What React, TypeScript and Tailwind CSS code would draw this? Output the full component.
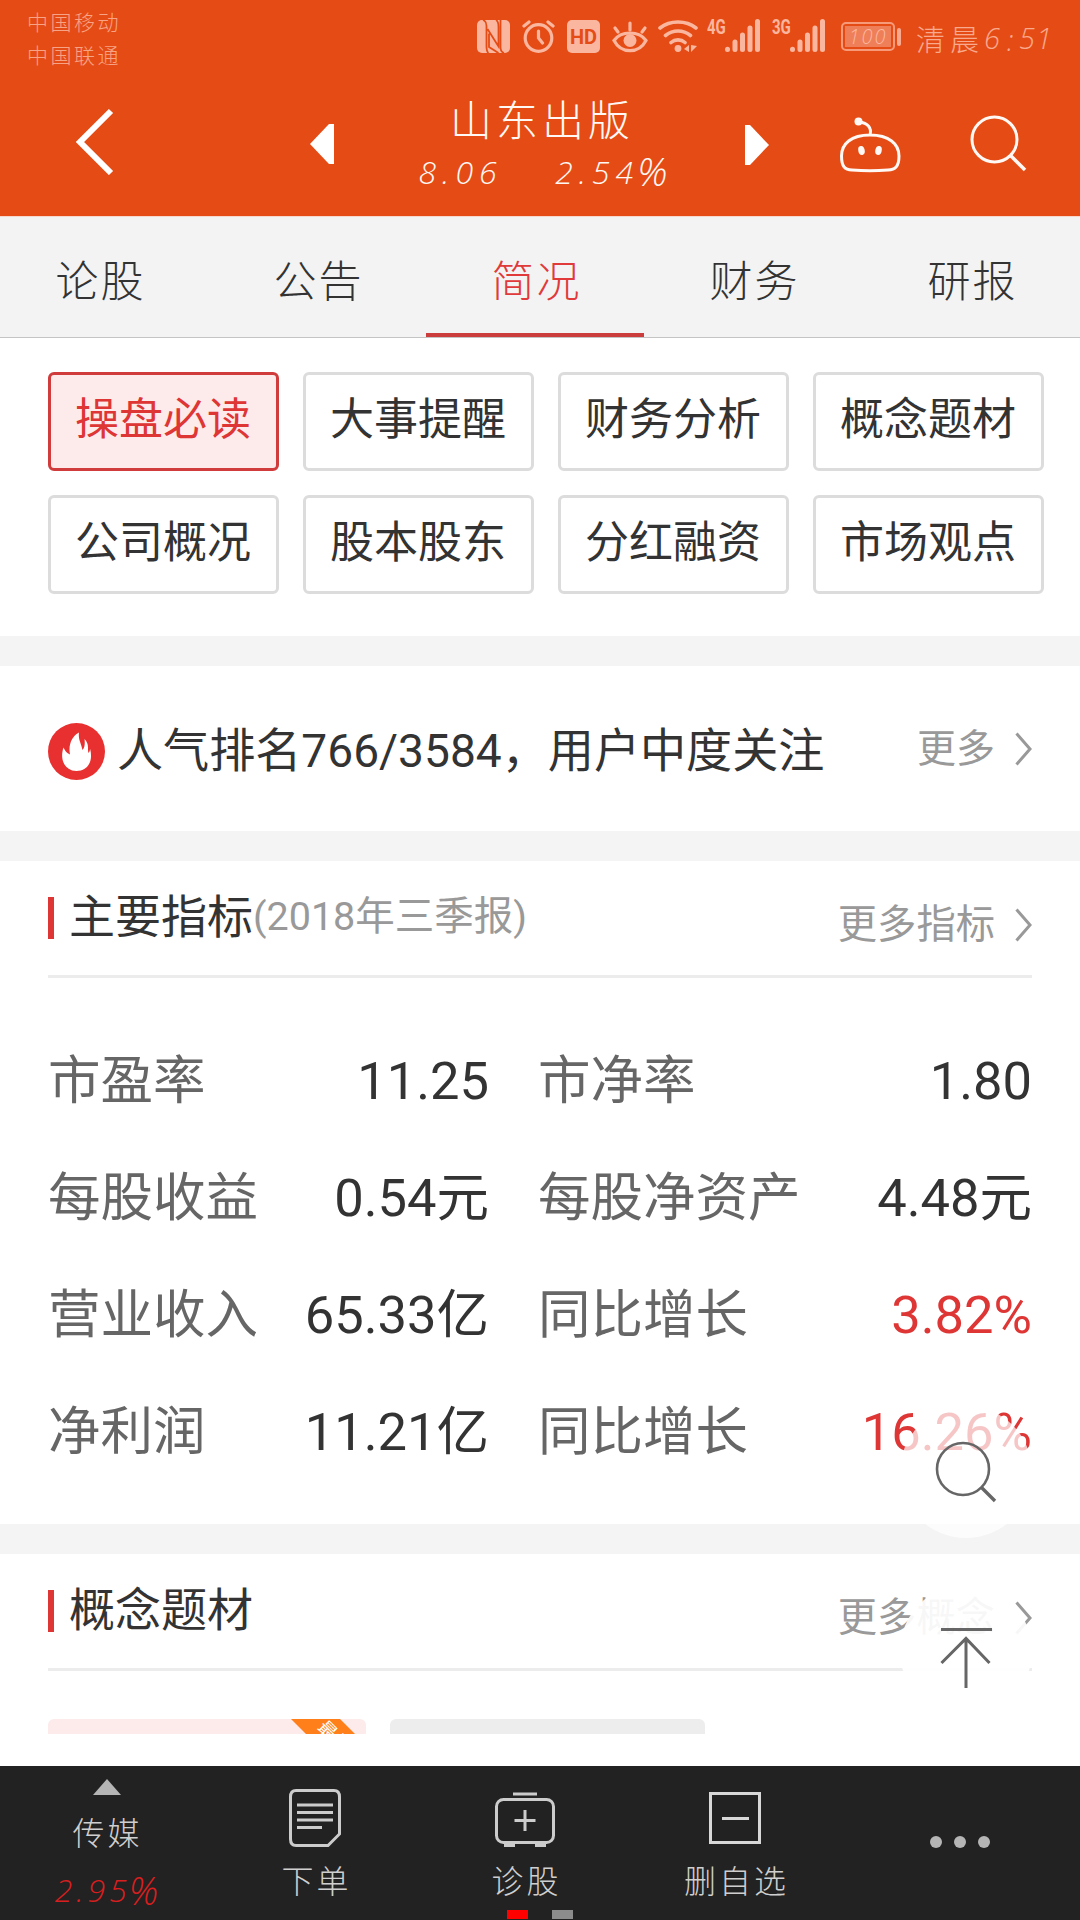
import React from "react";

const SANS = "font-['Roboto','Noto_Sans_CJK_SC',sans-serif]";
const HAND = "font-['Noto_Sans_CJK_SC',sans-serif] font-light";
const HAND_NUM = "font-['Open_Sans','Noto_Sans',sans-serif] font-light italic";

function Signal({ label }: { label: string }) {
  return (
    <div className="flex h-[33px] w-[53px] items-start">
      <span className="w-[18px] origin-left scale-x-[0.75] font-['Roboto',sans-serif] text-[20px] leading-[16px] font-bold">{label}</span>
      <svg className="h-[33px] w-[35px]" viewBox="0 0 35 33" stroke="currentColor" strokeWidth="5" strokeLinecap="round">
        <path d="M2.5 30.2v.3M10 23v7.5M17.500 16v14.500M25 9v21.500M32.500 2.500v28" />
      </svg>
    </div>
  );
}

function StatusBar() {
  return (
    <div className="flex h-[72px] items-start text-[#fbb69f]">
      <div className={`mt-[5px] ml-[27px] w-[450px] text-[21px] leading-[33px] tracking-[2.5px] text-[#f7a386] ${HAND}`}>
        <div>中国移动</div>
        <div>中国联通</div>
      </div>
      <div className="mt-[20px] flex gap-[12px]">
        <svg className="h-[33px] w-[33px]" viewBox="0 0 33 33">
          <rect width="33" height="33" rx="5" fill="currentColor" />
          <path d="M6 0C9 1 9.500 3 9.500 6V26c0 4 .5 6 2 7M10.500 9L21.500 26.500V7C21.500 3 21 1 19 0M27 33C24 32 23.500 30 23.500 27V0M12 13.500V27L21.500 33" fill="none" stroke="#e54c15" strokeWidth="1.800" />
        </svg>
        <svg className="h-[33px] w-[33px]" viewBox="0 0 33 33" fill="none" stroke="currentColor" strokeWidth="3.200" strokeLinecap="round">
          <circle cx="16.500" cy="18" r="13.300" />
          <path d="M16.500 11v7l4 5M2 6l5-4M31 6l-5-4" />
        </svg>
        <div className="flex h-[33px] w-[33px] items-center justify-center rounded-[5px] bg-[#fbb69f] font-['Roboto',sans-serif] text-[20px] leading-none font-bold text-[#e54c15]">HD</div>
        <svg className="h-[33px] w-[36px]" viewBox="0 0 36 33" fill="none" stroke="currentColor" strokeWidth="3.200" strokeLinecap="round">
          <path d="M2 20.500C9 10.500 27 10.500 34 20.500C27 34 9 34 2 20.500Z" />
          <circle cx="18" cy="20.500" r="6.500" fill="currentColor" stroke="none" />
          <path d="M18 3v7M3 8l3 4M33 8l-3 4" />
        </svg>
      </div>
      <svg className="mt-[20px] ml-[10px] h-[33px] w-[40px]" viewBox="0 0 40 33" fill="none" stroke="currentColor" strokeWidth="3.600" strokeLinecap="round">
        <path d="M2 8C12 0 28 0 38 8M7.500 15.500C15 9.500 25 9.500 32.500 15.500M13 22.500C17 19 23 19 27 22.500" />
        <circle cx="20" cy="28.500" r="3.400" fill="currentColor" stroke="none" />
        <path d="M31 25v7l-5-3ZM33 32v-7l6 1Z" fill="currentColor" stroke="none" />
      </svg>
      <div className="mt-[19px] ml-[9px] flex gap-[12px]">
        <Signal label="4G" />
        <Signal label="3G" />
      </div>
      <div className="mt-[22px] ml-[16px] flex items-center gap-[2px]">
        <div className="h-[29px] w-[54px] rounded-[5px] border-2 border-[#f79a7a] p-[2px]">
          <div className={`flex h-[21px] items-center justify-center bg-[#ef7f58] text-[20px] leading-none tracking-[2px] ${HAND_NUM}`}>100</div>
        </div>
        <div className="h-[18px] w-[4px] rounded-[2px] bg-[#f9a98e]" />
      </div>
      <div className="mt-[19px] ml-[15px] flex h-[38px] items-center text-[#f9a98e]">
        <span className={`text-[29px] leading-[36px] tracking-[5px] ${HAND}`}>清晨</span>
        <span className={`text-[29px] leading-[32px] tracking-[1px] ${HAND_NUM}`}>6</span>
        <span className={`w-[18px] pt-[3px] text-center text-[29px] leading-[32px] ${HAND_NUM}`}>:</span>
        <span className={`text-[29px] leading-[32px] tracking-[1px] ${HAND_NUM}`}>51</span>
      </div>
    </div>
  );
}

function TitleBar() {
  return (
    <div className="flex h-[144px] items-start text-[#fff8f4]">
      <svg className="mt-[35px] ml-[74px] h-[68px] w-[42px]" viewBox="0 0 42 68" fill="none" stroke="white" strokeWidth="6">
        <path d="M37 4L6 35L37 66" />
      </svg>
      <svg className="mt-[52px] ml-[194px] h-[40px] w-[24px]" viewBox="0 0 24 40" fill="white">
        <path d="M24 0h-5L0 20L19 40h5Z" />
      </svg>
      <div className="flex w-[411px] flex-col items-center">
        <div className={`mt-[20px] pl-[5px] text-[42px] leading-[52px] tracking-[4px] whitespace-nowrap ${HAND}`}>山东出版</div>
        <div className={`mt-[4px] flex w-[248px] justify-between pt-[2px] text-[32px] leading-[44px] whitespace-nowrap ${HAND_NUM}`}>
          <span className="ml-[3px] tracking-[6px]">8.06</span>
          <span className="-mr-[4px] flex tracking-[6px]">
            2.54<span className="-mt-[1px] -ml-[2px] text-[39px] tracking-normal">%</span>
          </span>
        </div>
      </div>
      <svg className="mt-[53px] h-[40px] w-[24px]" viewBox="0 0 24 40" fill="white">
        <path d="M0 0h5L24 20L5 40H0Z" />
      </svg>
      <svg className="mt-[44px] ml-[70px] h-[58px] w-[62px]" viewBox="0 0 62 58" fill="none" stroke="currentColor" strokeWidth="3">
        <path d="M31 19C50 19 60 28 60 40C60 51 56 53.500 49 54Q31 55.500 13 54C6 53.500 2.500 51 2.500 40C2.500 28 12 19 31 19ZM31 19C33 12 29 7 20 6" />
        <circle cx="19.500" cy="5.500" r="4" fill="currentColor" stroke="none" />
        <ellipse cx="22.500" cy="34.500" rx="3.200" ry="4.500" fill="currentColor" stroke="none" transform="rotate(-12 22.500 34.500)" />
        <ellipse cx="39.500" cy="34.500" rx="3.200" ry="4.500" fill="currentColor" stroke="none" transform="rotate(12 39.500 34.500)" />
      </svg>
      <svg className="mt-[43px] ml-[69px] h-[58px] w-[58px]" viewBox="0 0 58 58" fill="none" stroke="currentColor" strokeWidth="3">
        <circle cx="24.500" cy="24.500" r="22.500" />
        <path d="M40 40L55 55" strokeWidth="3.500" />
      </svg>
    </div>
  );
}

const tabs = ["论股", "公告", "简况", "财务", "研报"];
const topics = ["操盘必读", "大事提醒", "财务分析", "概念题材", "公司概况", "股本股东", "分红融资", "市场观点"];
const metrics = [
  ["市盈率", "11.25", "市净率", "1.80", false],
  ["每股收益", "0.54元", "每股净资产", "4.48元", false],
  ["营业收入", "65.33亿", "同比增长", "3.82%", true],
  ["净利润", "11.21亿", "同比增长", "16.26%", true],
] as const;

function Chevron() {
  return (
    <svg className="ml-[20px] h-[34px] w-[17px]" viewBox="0 0 17 34" fill="none" stroke="#999999" strokeWidth="3">
      <path d="M1.500 1.500L15 17L1.500 32.500" />
    </svg>
  );
}

function SectionHead({ title, note, more }: { title: string; note?: string; more: string }) {
  return (
    <div className="mx-[48px] flex h-[117px] items-start border-b-[3px] border-[#ececec]">
      <div className="mt-[36px] h-[42px] w-[6px] bg-[#de3535]" />
      <div className="mt-[26px] ml-[15px] flex h-[60px] items-center whitespace-nowrap">
        <span className="text-[46px] text-[#333333]">{title}</span>
        {note && <span className="text-[39.500px] text-[#999999]">{note}</span>}
      </div>
      <div className="mt-[39px] ml-auto flex h-[50px] items-center text-[39.300px] text-[#999999]">
        <span>{more}</span>
        <Chevron />
      </div>
    </div>
  );
}

function BottomBar() {
  const label = `text-[32px] leading-[40px] tracking-[3px] whitespace-nowrap text-[#cfcfcf] ${HAND}`;
  return (
    <div className="relative grid h-[154px] grid-cols-[210px_210px_210px_210px_240px] bg-[#222222]">
      <div className="flex flex-col items-center">
        <svg className="mt-[13px] ml-[3px] h-[16px] w-[28px]" viewBox="0 0 28 16" fill="#b5b5b5">
          <path d="M14 0L28 16H0Z" />
        </svg>
        <div className={`mt-[16px] ml-[5px] ${label}`}>传媒</div>
        <div className={`mt-[17px] ml-[3px] flex text-[32px] leading-[44px] tracking-[4px] text-[#d81e1e] ${HAND_NUM}`}>
          2.95<span className="-ml-[2px] text-[38px] tracking-normal">%</span>
        </div>
      </div>
      <div className="flex flex-col items-center pt-[23px]">
        <svg className="h-[58px] w-[52px]" viewBox="0 0 52 58" fill="none" stroke="#cccccc" strokeWidth="3">
          <path d="M7 1.500H45Q50.500 1.500 50.500 8V45L39 56.500H7Q1.500 56.500 1.500 50V8Q1.500 1.500 7 1.500Z" />
          <path d="M8 16H44M8 23.500H44M8 31H44M8 38.500H33" />
        </svg>
        <div className={`mt-[12px] ml-[3px] ${label}`}>下单</div>
      </div>
      <div className="flex flex-col items-center pt-[25px]">
        <svg className="h-[56px] w-[60px]" viewBox="0 0 60 56" fill="none" stroke="#cccccc" strokeWidth="3">
          <rect x="1.500" y="8.500" width="57" height="43" rx="7" />
          <path d="M18 3H42M30 19v21M19.500 29.500h21" />
          <path d="M9 54H20M40 54H51" strokeWidth="4" />
        </svg>
        <div className={`mt-[12px] ml-[3px] ${label}`}>诊股</div>
      </div>
      <div className="flex flex-col items-center pt-[26px]">
        <div className="flex h-[52px] w-[52px] items-center justify-center border-[3px] border-[#d8d8d8]">
          <div className="h-[3px] w-[27px] bg-[#d8d8d8]" />
        </div>
        <div className={`mt-[15px] ml-[3px] ${label}`}>删自选</div>
      </div>
      <div className="flex justify-center gap-[12px] pt-[70px]">
        <div className="h-[12px] w-[12px] rounded-full bg-[#b5b5b5]" />
        <div className="h-[12px] w-[12px] rounded-full bg-[#b5b5b5]" />
        <div className="h-[12px] w-[12px] rounded-full bg-[#b5b5b5]" />
      </div>
      <div className="absolute bottom-[1px] left-[507px] flex gap-[24px]">
        <div className="h-[9px] w-[21px] bg-[#ff0000]" />
        <div className="h-[9px] w-[21px] bg-[#8c8c8c]" />
      </div>
    </div>
  );
}

export default function App() {
  return (
    <div className={`relative h-[1920px] w-[1080px] overflow-hidden bg-white ${SANS}`}>
      <header className="h-[216px] bg-[#e54c15]">
        <StatusBar />
        <TitleBar />
      </header>

      <nav className="flex h-[122px] overflow-hidden border-t border-b border-t-[#f6d8cc] border-b-[#c4c4c4] bg-[#f3f3f3]">
        <div className="-ml-[10px] flex">
          {tabs.map((t) => (
            <div
              key={t}
              className={`flex h-[120px] w-[218px] justify-center border-b-[4px] pt-[33px] pl-[3px] text-[43px] leading-[56px] tracking-[2px] ${HAND} ${
                t === "简况" ? "border-[#cb3d3d] text-[#e03a3a]" : "border-transparent text-[#333333]"
              }`}
            >
              {t}
            </div>
          ))}
        </div>
      </nav>

      <div className="grid h-[298px] grid-cols-[repeat(4,231px)] content-start gap-[24px] pt-[34px] pl-[48px]">
        {topics.map((t, i) => (
          <div
            key={t}
            className={`flex h-[99px] items-center justify-center rounded-[6px] border-[3px] pr-[1px] pb-[4px] text-[44px] leading-[60px] ${
              i === 0 ? "border-[#d03c3c] bg-[#fdeaea] text-[#de3535]" : "border-[#dcdcdc] text-[#333333]"
            }`}
          >
            {t}
          </div>
        ))}
      </div>

      <div className="h-[30px] bg-[#f4f4f4]" />

      <div className="mx-[48px] flex h-[165px] items-center">
        <svg className="mt-[6px] h-[57px] w-[57px]" viewBox="0 0 57 57">
          <circle cx="28.500" cy="28.500" r="28.500" fill="#e83030" />
          <path d="M31 9.500C30 16 33 20 34.500 27C37 24 37 20 36.500 16C42 22 39 26 40.500 30C42 28 42 27 42 25.500C46 40 38 48 28.500 48C18 48 11 38 15.500 24.500C17 28 18.500 30 22 31.500C20 22 24 13 31 9.500Z" fill="white" />
        </svg>
        <span className="mt-[6px] ml-[12px] text-[46.100px] whitespace-nowrap text-[#333333]">人气排名766/3584，用户中度关注</span>
        <div className="mt-[1px] ml-auto flex items-center text-[39px] text-[#999999]">
          <span>更多</span>
          <Chevron />
        </div>
      </div>

      <div className="h-[30px] bg-[#f4f4f4]" />

      <SectionHead title="主要指标" note="(2018年三季报)" more="更多指标" />

      <div className="mx-[48px] h-[546px] pt-[44px] text-[52.500px] text-[#333333]">
        {metrics.map(([a, b, c, d, up]) => (
          <div key={a} className="flex h-[117px] items-center leading-[60px] whitespace-nowrap">
            <span className="text-[#666666]">{a}</span>
            <span className="ml-auto">{b}</span>
            <div className="ml-[49px] flex w-[494px] justify-between">
              <span className="text-[#666666]">{c}</span>
              <span className={up ? "text-[#de3535]" : ""}>{d}</span>
            </div>
          </div>
        ))}
      </div>

      <div className="h-[30px] bg-[#f4f4f4]" />

      <SectionHead title="概念题材" more="更多概念" />

      <div className="h-[95px] overflow-hidden pt-[48px] pl-[48px]">
        <div className="flex h-[15px] gap-[24px] overflow-hidden">
          <div className="relative h-[90px] w-[318px] overflow-hidden rounded-[6px] bg-[#fdeaea]">
            <svg className="absolute top-0 left-[243px] h-[75px] w-[75px]" viewBox="0 0 75 75">
              <path d="M0 0H49L75 26V75Z" fill="#ff7f1a" />
            </svg>
            <span className="absolute top-[13px] left-[265px] rotate-45 text-[18px] leading-[22px] whitespace-nowrap text-white">最相关</span>
          </div>
          <div className="h-[90px] w-[315px] rounded-[6px] bg-[#ededed]" />
        </div>
      </div>

      <BottomBar />

      <div className="absolute top-[1406px] left-[900px] h-[132px] w-[132px] rounded-full bg-white/72">
        <svg className="mt-[34px] ml-[34px] h-[66px] w-[66px]" viewBox="0 0 66 66" fill="none" stroke="#666666" strokeWidth="2.600">
          <circle cx="29" cy="29" r="26" />
          <path d="M47.500 47.500L61 61" strokeWidth="3.400" />
        </svg>
      </div>
      <div className="absolute top-[1585px] left-[900px] h-[132px] w-[132px] rounded-full bg-white/92">
        <svg className="mt-[40px] ml-[40px] h-[66px] w-[54px]" viewBox="0 0 54 66" fill="none" stroke="#666666" strokeWidth="3">
          <path d="M1 4.500H52M26 63V15M1.500 38L26 13.500L49.500 38" />
        </svg>
      </div>
    </div>
  );
}
